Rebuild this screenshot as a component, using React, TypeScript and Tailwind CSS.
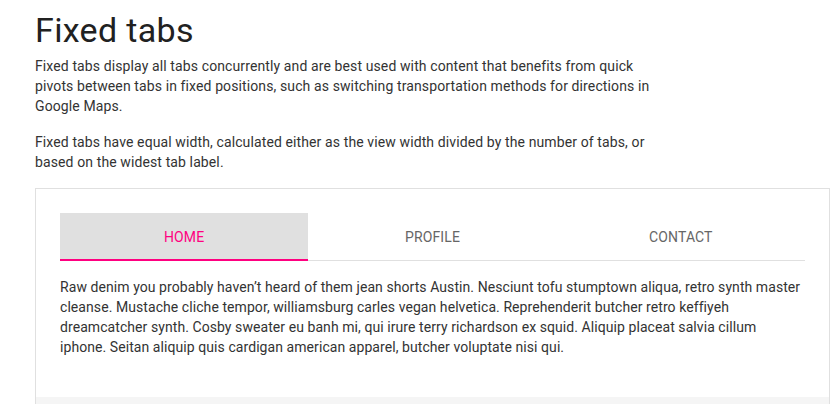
import React, { useState } from "react"
import clsx from "clsx"

const tabs = [
  {
    label: "Home",
    body: "Raw denim you probably haven\u2019t heard of them jean shorts Austin. Nesciunt tofu stumptown aliqua, retro synth master cleanse. Mustache cliche tempor, williamsburg carles vegan helvetica. Reprehenderit butcher retro keffiyeh dreamcatcher synth. Cosby sweater eu banh mi, qui irure terry richardson ex squid. Aliquip placeat salvia cillum iphone. Seitan aliquip quis cardigan american apparel, butcher voluptate nisi qui.",
  },
  {
    label: "Profile",
    body: "Food truck fixie locavore, accusamus mcsweeney's marfa nulla single-origin coffee squid. Exercitation +1 labore velit, blog sartorial PBR leggings next level wes anderson artisan four loko farm-to-table craft beer twee.",
  },
  {
    label: "Contact",
    body: "Etsy mixtape wayfarers, ethical wes anderson tofu before they sold out mcsweeney's organic lomo retro fanny pack lo-fi farm-to-table readymade.",
  },
]

export default function App() {
  const [active, setActive] = useState(0)

  return (
    <div
      className="min-h-screen bg-white pl-[35px] text-[#333]"
      style={{ fontFamily: "Roboto, 'Liberation Sans', sans-serif" }}
    >
      <h1 className="pt-2 text-[34px] leading-[44px] font-normal tracking-[0.01em] text-[#212121]">
        Fixed tabs
      </h1>
      <div className="mt-1 w-[630px] text-sm leading-5 tracking-[0.008em]">
        <p>
          Fixed tabs display all tabs concurrently and are best used with content that benefits from quick
          pivots between tabs in fixed positions, such as switching transportation methods for directions in
          Google Maps.
        </p>
        <p className="mt-4">
          Fixed tabs have equal width, calculated either as the view width divided by the number of tabs, or
          based on the widest tab label.
        </p>
      </div>

      <div className="mt-4 w-[795px] border border-[#e0e0e0]">
        <div className="p-6 pb-10">
          <div className="relative flex">
            <div className="absolute inset-x-0 bottom-0 h-px bg-[#e0e0e0]" />
            {tabs.map((tab, i) => (
              <button
                key={tab.label}
                type="button"
                onClick={() => setActive(i)}
                className={clsx(
                  "relative flex h-12 flex-1 items-center justify-center text-sm uppercase tracking-[0.009em]",
                  i === active ? "bg-[#e0e0e0] text-[#ff0080]" : "text-[#666]"
                )}
              >
                {tab.label}
                {i === active && (
                  <span className="absolute inset-x-0 bottom-0 h-0.5 bg-[#ff0080]" />
                )}
              </button>
            ))}
          </div>
          <p className="mt-4 text-sm leading-5 tracking-[0.005em] text-[#333]">{tabs[active].body}</p>
        </div>
        <div className="h-20 bg-[#f5f5f5]" />
      </div>
    </div>
  )
}
